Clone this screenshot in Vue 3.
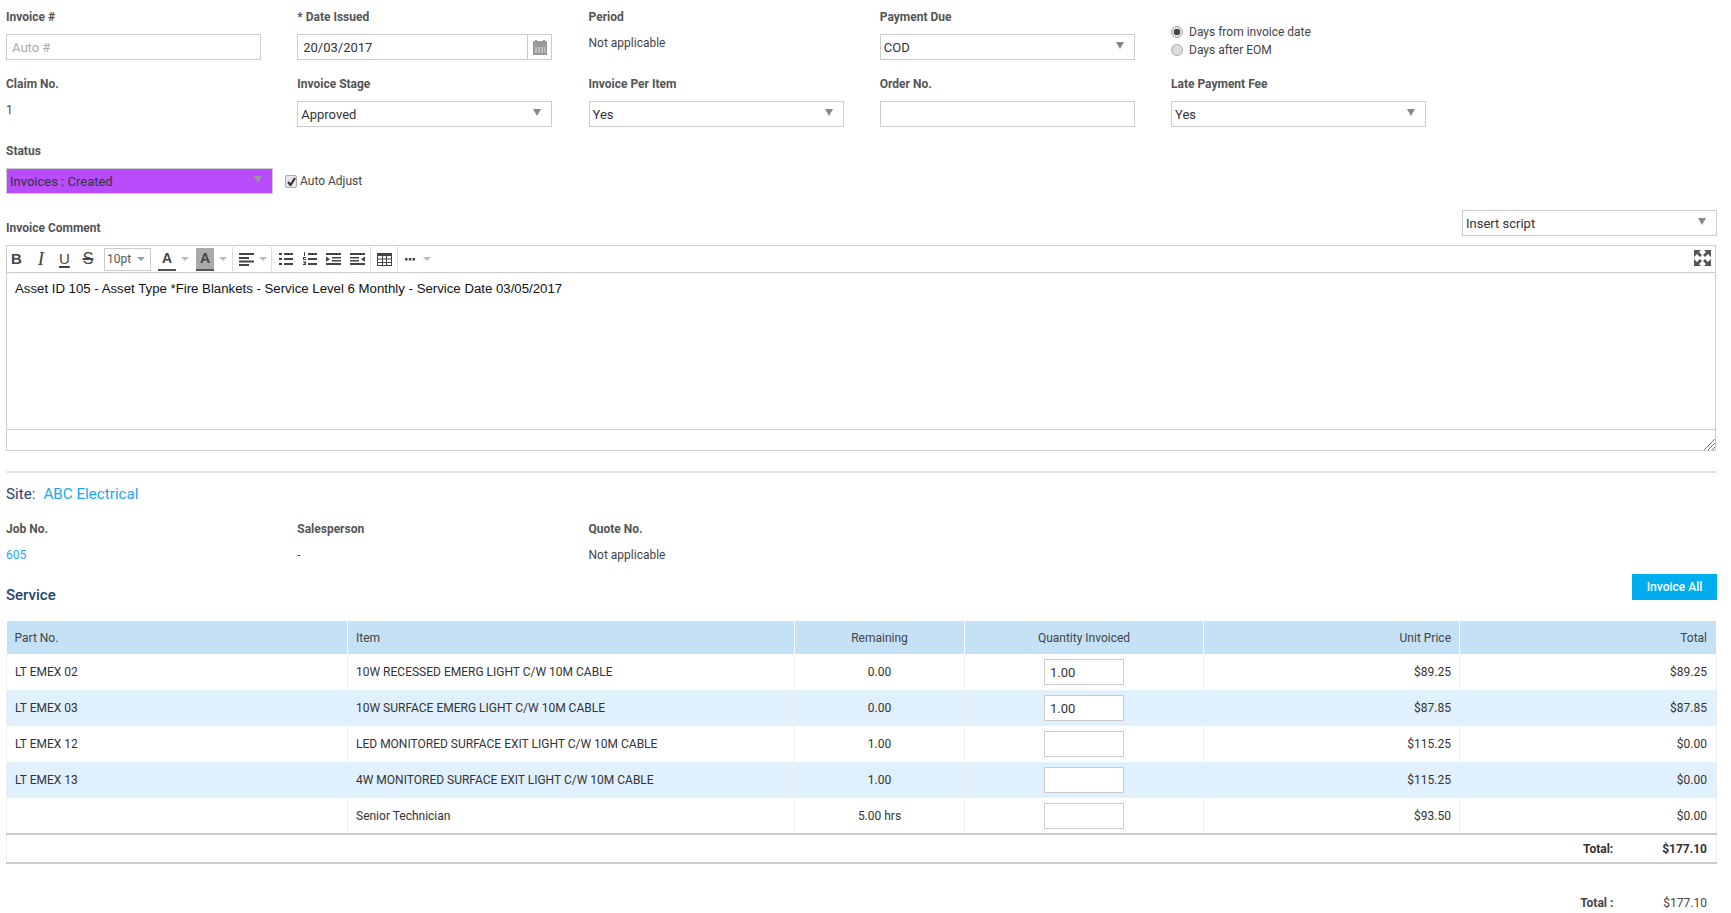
<template>
  <div class="page">
    <div class="formRow rowOne">
      <div class="field">
        <label>Invoice #</label>
        <input class="box" type="text" placeholder="Auto #">
      </div>
      <div class="field">
        <label>* Date Issued</label>
        <div class="dateBox">
          <span class="dateValue">20/03/2017</span>
          <span class="dateBtn">
            <svg width="14" height="15" viewBox="0 0 14 15">
              <path fill="#999" d="M0 1h2V0h2v1h6V0h2v1h2v14H0z"/>
              <path fill="#e4e4e4" d="M2 7.500h2v1H2zM5 7.500h2v1H5zM8 7.500h2v1H8zM11 7.500h1.500v1H11zM2 9.500h2v1H2zM5 9.500h2v1H5zM8 9.500h2v1H8zM11 9.500h1.500v1H11zM2 11.500h2v1H2zM5 11.500h2v1H5zM8 11.500h2v1H8zM11 11.500h1.500v1H11z"/>
            </svg>
          </span>
        </div>
      </div>
      <div class="field">
        <label>Period</label>
        <div class="plain">Not applicable</div>
      </div>
      <div class="field">
        <label>Payment Due</label>
        <div class="box select">COD<i class="caret"></i></div>
      </div>
      <div class="radios">
        <div class="radioLine"><span class="radio on"></span>Days from invoice date</div>
        <div class="radioLine"><span class="radio"></span>Days after EOM</div>
      </div>
    </div>

    <div class="formRow rowTwo">
      <div class="field">
        <label>Claim No.</label>
        <div class="plain">1</div>
      </div>
      <div class="field">
        <label>Invoice Stage</label>
        <div class="box select">Approved<i class="caret"></i></div>
      </div>
      <div class="field">
        <label>Invoice Per Item</label>
        <div class="box select">Yes<i class="caret"></i></div>
      </div>
      <div class="field">
        <label>Order No.</label>
        <div class="box"></div>
      </div>
      <div class="field">
        <label>Late Payment Fee</label>
        <div class="box select">Yes<i class="caret"></i></div>
      </div>
    </div>

    <div class="statusRow">
      <div class="field">
        <label>Status</label>
        <div class="statusLine">
          <div class="box select status">Invoices : Created<i class="caret"></i></div>
          <span class="check">
            <svg width="9" height="9" viewBox="0 0 9 9"><path d="M1 5l2.500 3L8 1" fill="none" stroke="#333" stroke-width="2.200"/></svg>
          </span>
          <span class="checkText">Auto Adjust</span>
        </div>
      </div>
    </div>

    <div class="commentHead">
      <label>Invoice Comment</label>
      <div class="box select script">Insert script<i class="caret"></i></div>
    </div>

    <div class="editor">
      <div class="toolbar">
        <span class="tool b">B</span>
        <span class="tool i">I</span>
        <span class="tool u">U</span>
        <span class="tool s">S</span>
        <span class="sizeBox">10pt<i class="caret small"></i></span>
        <span class="colorA">A</span><i class="caret small light"></i>
        <span class="colorA shaded">A</span><i class="caret small light"></i>
        <span class="sep first"></span>
        <svg class="ico align" width="15" height="14" viewBox="0 0 15 14"><path fill="#444" d="M0 1h15v2H0zM0 5h10v2H0zM0 8.500h15v2H0zM0 12h10v2H0z"/></svg>
        <i class="caret small light"></i>
        <span class="sep second"></span>
        <svg class="ico bullets" width="14" height="14" viewBox="0 0 14 14"><path fill="#444" d="M0 1h3v2H0zM5 1h9v2H5zM0 6h3v2H0zM5 6h9v2H5zM0 11h3v2H0zM5 11h9v2H5z"/></svg>
        <svg class="ico numbers" width="14" height="14" viewBox="0 0 14 14"><path fill="#444" d="M5 1h9v2H5zM5 6h9v2H5zM5 11h9v2H5zM1 0h1v4H1zM0 5h3v1H1v1h2v1H0zM0 9.500h3V13H0v-1h2v-.5H1v-1h1V10.500H0z"/></svg>
        <svg class="ico indent" width="15" height="14" viewBox="0 0 15 14"><path fill="#444" d="M0 1h15v2H0zM6 5h9v1.500H6zM6 8h9v1.500H6zM0 11h15v2H0zM0 4.500L4 7.200 0 9.800z"/></svg>
        <svg class="ico outdent" width="15" height="14" viewBox="0 0 15 14"><path fill="#444" d="M0 1h15v2H0zM0 5h9v1.500H0zM0 8h9v1.500H0zM0 11h15v2H0zM15 4.500L11 7.200 15 9.800z"/></svg>
        <span class="sep third"></span>
        <svg class="ico table" width="15" height="13" viewBox="0 0 15 13"><path fill="#444" d="M0 0h15v13H0zM1 3v2.500h4V3zM6 3v2.500h3V3zM10 3v2.500h4V3zM1 6.500V9h4V6.500zM6 6.500V9h3V6.500zM10 6.500V9h4V6.500zM1 10v2h4v-2zM6 10v2h3v-2zM10 10v2h4v-2z" fill-rule="evenodd"/></svg>
        <span class="sep fourth"></span>
        <svg class="ico dots" width="10" height="4" viewBox="0 0 10 4"><path fill="#444" d="M0 1h2.500v2.500H0zM3.800 1h2.500v2.500H3.800zM7.500 1H10v2.500H7.500z"/></svg>
        <i class="caret small light last"></i>
        <svg class="fullIco" width="17" height="16" viewBox="0 0 17 16"><path fill="#555" d="M0 0h7L5 2l3 3-2 2-3-3-3 3zM17 0h-7l2 2-3 3 2 2 3-3 3 3zM0 16h7l-2-2 3-3-2-2-3 3-3-3zM17 16h-7l2-2-3-3 2-2 3 3 3-3z"/></svg>
      </div>
      <div class="editArea">Asset ID 105 - Asset Type *Fire Blankets - Service Level 6 Monthly - Service Date 03/05/2017</div>
      <div class="statusBar">
        <svg class="grip" width="11" height="11" viewBox="0 0 11 11"><path stroke="#777" d="M11 0L0 11M11 4L4 11M11 8L8 11"/></svg>
      </div>
    </div>

    <div class="divider"></div>

    <div class="siteLine">Site:<a>ABC Electrical</a></div>

    <div class="formRow metaRow">
      <div class="field">
        <label>Job No.</label>
        <div class="plain link">605</div>
      </div>
      <div class="field">
        <label>Salesperson</label>
        <div class="plain">-</div>
      </div>
      <div class="field">
        <label>Quote No.</label>
        <div class="plain">Not applicable</div>
      </div>
    </div>

    <div class="serviceHead">
      <span class="serviceTitle">Service</span>
      <button class="invoiceAll">Invoice All</button>
    </div>

    <table class="grid">
      <colgroup>
        <col style="width: 341px">
        <col style="width: 447px">
        <col style="width: 170px">
        <col style="width: 239px">
        <col style="width: 256px">
        <col>
      </colgroup>
      <thead>
        <tr>
          <th>Part No.</th>
          <th>Item</th>
          <th class="mid">Remaining</th>
          <th class="mid">Quantity Invoiced</th>
          <th class="right">Unit Price</th>
          <th class="right lastCol">Total</th>
        </tr>
      </thead>
      <tbody>
        <tr v-for="row in rows" :key="row.item">
          <td>{{ row.part }}</td>
          <td>{{ row.item }}</td>
          <td class="mid">{{ row.remaining }}</td>
          <td class="mid"><input class="qty" type="text" :value="row.qty"></td>
          <td class="right">{{ row.price }}</td>
          <td class="right lastCol">{{ row.total }}</td>
        </tr>
      </tbody>
      <tfoot>
        <tr>
          <td colspan="6" class="lastCol">
            <div class="footTotal"><span>Total:</span><span>$177.10</span></div>
          </td>
        </tr>
      </tfoot>
    </table>

    <div class="grandTotal"><b>Total :</b><span>$177.10</span></div>
  </div>
</template>

<script setup>
const rows = [
  { part: 'LT EMEX 02', item: '10W RECESSED EMERG LIGHT C/W 10M CABLE', remaining: '0.00', qty: '1.00', price: '$89.25', total: '$89.25' },
  { part: 'LT EMEX 03', item: '10W SURFACE EMERG LIGHT C/W 10M CABLE', remaining: '0.00', qty: '1.00', price: '$87.85', total: '$87.85' },
  { part: 'LT EMEX 12', item: 'LED MONITORED SURFACE EXIT LIGHT C/W 10M CABLE', remaining: '1.00', qty: '', price: '$115.25', total: '$0.00' },
  { part: 'LT EMEX 13', item: '4W MONITORED SURFACE EXIT LIGHT C/W 10M CABLE', remaining: '1.00', qty: '', price: '$115.25', total: '$0.00' },
  { part: '', item: 'Senior Technician', remaining: '5.00 hrs', qty: '', price: '$93.50', total: '$0.00' }
]
</script>

<style>
html, body {
  background: #fff;
}
</style>

<style scoped>
.page {
  width: 1731px;
  height: 913px;
  box-sizing: border-box;
  padding: 0 14px 0 6px;
  font-family: Roboto, "Liberation Sans", sans-serif;
  font-size: 12px;
  color: #333;
  overflow: hidden;
}

label {
  display: block;
  font-weight: 700;
  font-size: 12px;
  line-height: 14px;
  color: #555;
}

.formRow {
  display: grid;
  grid-template-columns: repeat(5, 291.250px);
}

.rowOne {
  padding-top: 10px;
}

.rowTwo {
  padding-top: 17px;
}

.field label {
  margin-bottom: 10px;
}

.box {
  display: flex;
  align-items: center;
  position: relative;
  box-sizing: border-box;
  width: 255px;
  height: 26px;
  padding: 0 3px;
  border: 1px solid #ccc;
  background: #fff;
  font: inherit;
  font-size: 13px;
  color: #333;
  outline: none;
}

input.box {
  padding: 0 5px;
}

input.box::placeholder {
  color: #aaa;
}

.caret {
  position: absolute;
  right: 10px;
  top: 7px;
  width: 0;
  height: 0;
  border-left: 4px solid transparent;
  border-right: 4px solid transparent;
  border-top: 7px solid #888;
}

.caret.small {
  position: static;
  display: inline-block;
  border-top-width: 4px;
  border-top-color: #999;
}

.caret.light {
  margin-left: 5px;
  border-top-color: #bbb;
}

.caret.last {
  margin-left: 8px;
}

.dateBox {
  display: flex;
  box-sizing: border-box;
  width: 255px;
  height: 26px;
  border: 1px solid #ccc;
}

.dateValue {
  flex: 1;
  padding: 0 5px;
  line-height: 26px;
  font-size: 13px;
}

.dateBtn {
  display: flex;
  align-items: center;
  justify-content: center;
  width: 23px;
  border-left: 1px solid #ccc;
}

.plain {
  line-height: 16px;
  color: #444;
}

.field .plain {
  margin-top: -1px;
  padding-top: 2px;
}

.radios {
  padding-top: 13px;
}

.radioLine {
  display: flex;
  align-items: center;
  gap: 6px;
  height: 18px;
  color: #444;
}

.radio {
  box-sizing: border-box;
  width: 12px;
  height: 12px;
  border-radius: 50%;
  border: 1px solid #aaa;
  background: #ddd;
}

.radio.on {
  background: radial-gradient(circle, #444 0 3px, #ddd 3.500px);
}

.statusRow {
  padding-top: 17px;
}

.statusLine {
  display: flex;
  align-items: center;
}

.status {
  width: 267px;
  background: #b94cfb;
  border-color: #ccc;
}

.status .caret {
  border-top-color: #999;
}

.check {
  display: flex;
  align-items: center;
  justify-content: center;
  box-sizing: border-box;
  width: 12px;
  height: 13px;
  margin-left: 12px;
  border: 1px solid #aaa;
  border-radius: 2px;
  background: #e8e8e8;
}

.checkText {
  margin-left: 3px;
  color: #444;
}

.commentHead {
  display: flex;
  justify-content: space-between;
  align-items: flex-end;
  margin-top: 16px;
  margin-bottom: 9px;
}

.commentHead label {
  margin-bottom: 1px;
}

.script {
  width: 255px;
}

.editor {
  box-sizing: border-box;
  width: 1710px;
  border: 1px solid #ccc;
}

.toolbar {
  display: flex;
  align-items: center;
  height: 26px;
  border-bottom: 1px solid #ccc;
  position: relative;
}

.tool {
  flex: none;
  font-family: "Liberation Sans", sans-serif;
  font-size: 15px;
  line-height: 18px;
  text-align: center;
  color: #444;
}

.tool.b {
  width: 10px;
  margin-left: 4px;
  font-weight: 700;
}

.tool.i {
  width: 10px;
  margin-left: 15px;
  font-style: italic;
  font-family: "Liberation Serif", serif;
  font-size: 19px;
}

.tool.u {
  width: 10px;
  margin-left: 13px;
  text-decoration: underline;
  text-decoration-thickness: 1.500px;
  text-underline-offset: 2px;
}

.tool.s {
  width: 14px;
  margin-left: 12px;
  font-size: 16px;
  text-decoration: line-through;
  text-decoration-thickness: 1.500px;
}

.sizeBox {
  display: flex;
  align-items: center;
  justify-content: space-between;
  flex: none;
  box-sizing: border-box;
  width: 47px;
  height: 23px;
  margin-left: 9px;
  padding: 0 5px 0 2px;
  border: 1px solid #ccc;
  color: #555;
}

.colorA {
  flex: none;
  box-sizing: border-box;
  width: 18px;
  height: 23px;
  margin-left: 7px;
  border-bottom: 2px solid #555;
  font-family: "Liberation Sans", sans-serif;
  font-weight: 700;
  font-size: 14px;
  line-height: 21px;
  text-align: center;
  color: #444;
}

.colorA.shaded {
  background: #aaa;
}

.sep {
  align-self: stretch;
  flex: none;
  width: 1px;
  margin: 1px 0;
  background: #ddd;
}

.sep.first {
  margin-left: 5px;
}

.sep.second {
  margin-left: 4px;
}

.sep.third {
  margin-left: 5px;
}

.sep.fourth {
  margin-left: 5px;
}

.ico {
  flex: none;
}

.ico.align {
  margin-left: 6px;
}

.ico.bullets {
  margin-left: 7px;
}

.ico.numbers {
  margin-left: 10px;
}

.ico.indent,
.ico.outdent {
  margin-left: 9px;
}

.ico.table {
  margin-left: 6px;
}

.ico.dots {
  margin-left: 7px;
}

.fullIco {
  position: absolute;
  right: 4px;
  top: 4px;
}

.editArea {
  box-sizing: border-box;
  height: 157px;
  padding: 8px 8px;
  border-bottom: 1px solid #ccc;
  font-family: "Liberation Sans", sans-serif;
  font-size: 13.220px;
  line-height: 16px;
  color: #111;
}

.statusBar {
  position: relative;
  height: 20px;
}

.grip {
  position: absolute;
  right: 0;
  bottom: 0;
}

.divider {
  height: 2px;
  margin-top: 20px;
  background: #e5e5e5;
}

.siteLine {
  margin-top: 12px;
  font-size: 15.200px;
  line-height: 18px;
  color: #1f4570;
}

.siteLine a {
  margin-left: 8px;
  color: #1aa7ec;
}

.metaRow {
  padding-top: 19px;
}

.link {
  color: #1aa7ec;
}

.serviceHead {
  display: flex;
  justify-content: space-between;
  align-items: center;
  margin-top: 11px;
  margin-bottom: 21px;
  height: 26px;
}

.serviceTitle {
  font-size: 15px;
  font-weight: 500;
  color: #1f4570;
  padding-top: 16px;
}

.invoiceAll {
  width: 85px;
  height: 26px;
  padding: 0;
  border: none;
  background: #00aeef;
  font: inherit;
  font-weight: 500;
  color: #fff;
}

.grid {
  width: 1711px;
  table-layout: fixed;
  border-collapse: collapse;
}

th {
  height: 33px;
  padding: 0 8px;
  background: #c5e1f6;
  border-right: 1px solid #fff;
  font-weight: 400;
  text-align: left;
  color: #444;
}

td {
  height: 36px;
  padding: 0 8px;
  border-right: 1px solid #eee;
  color: #333;
}

tbody tr:last-child td {
  height: 35px;
}

tbody tr:nth-child(even) td {
  background: #e1f0fd;
}

tbody tr td:first-child {
  border-left: 1px solid #eee;
}

.mid {
  text-align: center;
}

.right {
  text-align: right;
}

.lastCol {
  padding-right: 9px;
}

.qty {
  box-sizing: border-box;
  width: 80px;
  height: 26px;
  padding: 0 5px;
  border: 1px solid #ccc;
  background: #fff;
  font: inherit;
  font-size: 13px;
  color: #333;
  vertical-align: middle;
  outline: none;
}

tfoot td {
  height: 27px;
  border-top: 2px solid #ccc;
  border-bottom: 2px solid #ccc;
  border-left: 1px solid #eee;
}

.footTotal {
  display: flex;
  justify-content: flex-end;
  gap: 49px;
  font-weight: 700;
}

.grandTotal {
  display: flex;
  justify-content: flex-end;
  gap: 50px;
  margin-top: 31px;
  padding-right: 10px;
  line-height: 16px;
  color: #444;
}
</style>
